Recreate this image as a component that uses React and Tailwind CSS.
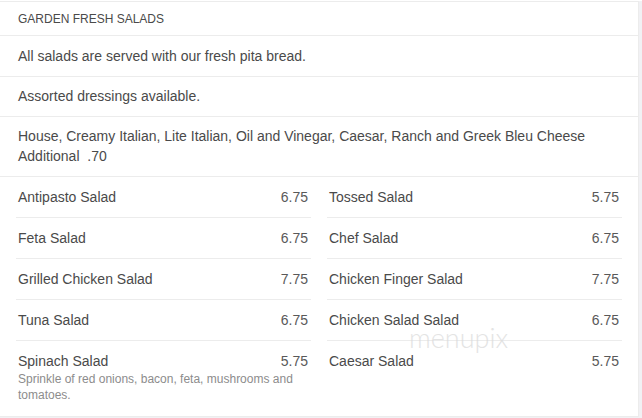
import React from "react";

const items = [
    [{name: "Antipasto Salad", price: "6.75"}, {name: "Tossed Salad", price: "5.75"}],
    [{name: "Feta Salad", price: "6.75"}, {name: "Chef Salad", price: "6.75"}],
    [{name: "Grilled Chicken Salad", price: "7.75"}, {name: "Chicken Finger Salad", price: "7.75"}],
    [{name: "Tuna Salad", price: "6.75"}, {name: "Chicken Salad Salad", price: "6.75"}],
    [
        {name: "Spinach Salad", price: "5.75", desc: "Sprinkle of red onions, bacon, feta, mushrooms and tomatoes."},
        {name: "Caesar Salad", price: "5.75"},
    ],
];

const MenuItem = ({item, last}) => (
    <div className={"py-[10px] pl-0.5 pr-[3px] " + (last ? "" : "border-b border-[#ececec]")}>
        <div className="flex justify-between text-[14px] leading-5 text-[#4a4a4a]">
            <span>{item.name}</span>
            <span className="text-[#595959]">{item.price}</span>
        </div>
        {item.desc && (
            <p className="text-[12px] leading-4 text-[#8c8c8c] pr-2">{item.desc}</p>
        )}
    </div>
);

export default function App() {
    return (
        <div className="w-[642px] h-[418px] bg-[#f1f1f4] font-['Liberation_Sans',Arial,sans-serif]">
            <div className="relative w-[639px] h-[416px] bg-white border-t border-r border-b border-[#ececec] mt-px">
                <div className="h-[34px] flex items-center pl-[18px] text-[12px] text-[#4a4a4a] uppercase border-b border-[#ececec]">
                    Garden Fresh Salads
                </div>
                <div className="h-[41px] flex items-center pl-[18px] text-[14px] text-[#4a4a4a] border-b border-[#ececec]">
                    All salads are served with our fresh pita bread.
                </div>
                <div className="h-[40px] flex items-center pl-[18px] text-[14px] text-[#4a4a4a] border-b border-[#ececec]">
                    Assorted dressings available.
                </div>
                <div className="h-[60px] pt-[9px] pl-[18px] text-[14px] leading-5 text-[#4a4a4a] border-b border-[#ececec]">
                    <p>House, Creamy Italian, Lite Italian, Oil and Vinegar, Caesar, Ranch and Greek Bleu Cheese</p>
                    <p>Additional&nbsp; .70</p>
                </div>
                <div className="grid grid-cols-2 gap-x-4 pl-4 pr-4">
                    <div className="flex flex-col">
                        {items.map((row, idx) => (
                            <MenuItem key={idx} item={row[0]} last={idx === items.length - 1}/>
                        ))}
                    </div>
                    <div className="flex flex-col">
                        {items.map((row, idx) => (
                            <MenuItem key={idx} item={row[1]} last={idx === items.length - 1}/>
                        ))}
                    </div>
                </div>
                <div className="absolute left-[409px] top-[316px] text-[27px] font-light text-[#d9d9d9] opacity-70 font-['Lato',sans-serif] pointer-events-none">
                    menupix
                </div>
            </div>
        </div>
    );
}
